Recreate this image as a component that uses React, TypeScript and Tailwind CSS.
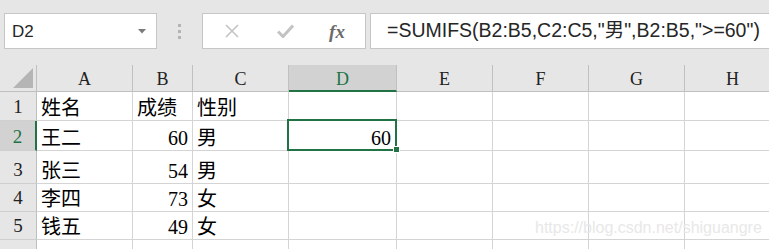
import React from "react";

const serif = { fontFamily: '"Liberation Serif", "Noto Sans CJK SC", serif' };
const sans = { fontFamily: '"Liberation Sans", "Noto Sans CJK SC", sans-serif' };

const cols = [
  { k: "A", w: "w-[96px]" },
  { k: "B", w: "w-[60px]" },
  { k: "C", w: "w-[96px]" },
  { k: "D", w: "w-[108px]" },
  { k: "E", w: "w-[96px]" },
  { k: "F", w: "w-[96px]" },
  { k: "G", w: "w-[96px]" },
  { k: "H", w: "w-[96px]" },
];

const rows: { h: string; cells: string[] }[] = [
  { h: "h-[29px]", cells: ["姓名", "成绩", "性别", "", "", "", "", ""] },
  { h: "h-[30px]", cells: ["王二", "60", "男", "60", "", "", "", ""] },
  { h: "h-[33px]", cells: ["张三", "54", "男", "", "", "", "", ""] },
  { h: "h-[28px]", cells: ["李四", "73", "女", "", "", "", "", ""] },
  { h: "h-[28px]", cells: ["钱五", "49", "女", "", "", "", "", ""] },
  { h: "h-[20px]", cells: ["", "", "", "", "", "", "", ""] },
];

const isNum = (s: string) => /^\d+$/.test(s);

export default function App() {
  return (
    <div className="relative w-[769px] h-[249px] overflow-hidden bg-white">
      {/* Formula bar area */}
      <div className="flex h-[65px] bg-[#e6e6e6] pt-[13px] pl-[4px] overflow-hidden">
        <div className="shrink-0 flex items-center justify-between w-[153px] h-[36px] bg-white border border-[#c6c6c6] pl-[7px] pr-[10px]">
          <span className="text-[17px] text-[#262626] leading-none" style={sans}>
            D2
          </span>
          <svg width="8" height="5" viewBox="0 0 8 5">
            <path d="M0 0 L8 0 L4 4.5 Z" fill="#7a7a7a" />
          </svg>
        </div>
        <div className="shrink-0 flex w-[45px] h-[36px] items-center justify-center">
          <div className="flex flex-col gap-[3px]">
            <div className="w-[3px] h-[3px] bg-[#b4b4b4]" />
            <div className="w-[3px] h-[3px] bg-[#b4b4b4]" />
            <div className="w-[3px] h-[3px] bg-[#b4b4b4]" />
          </div>
        </div>
        <div className="shrink-0 flex items-center w-[164px] h-[36px] bg-white border border-[#c6c6c6]">
          <div className="w-[56px] flex justify-center pl-[2px]">
            <svg width="16" height="16" viewBox="0 0 16 16">
              <path d="M2 2 L14 14 M14 2 L2 14" stroke="#c3c3c3" strokeWidth="1.6" fill="none" />
            </svg>
          </div>
          <div className="w-[52px] flex justify-center">
            <svg width="17" height="14" viewBox="0 0 17 14">
              <path d="M1 7.5 L6 12.5 L16 1.5" stroke="#c3c3c3" strokeWidth="3" fill="none" />
            </svg>
          </div>
          <div className="w-[52px] flex justify-center">
            <span
              className="italic font-bold text-[19px] text-[#6b6b6b] leading-none"
              style={{ fontFamily: '"Liberation Serif", serif' }}
            >
              fx
            </span>
          </div>
        </div>
        <div className="shrink-0 flex items-center w-[420px] h-[36px] bg-white border border-[#c6c6c6] ml-[4px] pl-[16px]">
          <span className="text-[19.5px] text-[#262626] leading-none whitespace-nowrap" style={sans}>
            =SUMIFS(B2:B5,C2:C5,"男",B2:B5,"&gt;=60")
          </span>
        </div>
      </div>

      {/* Column headers */}
      <div className="flex h-[27px]">
        <div className="relative w-[37px] shrink-0 bg-[#e6e6e6] border-r border-b border-[#c0c0c0]">
          <svg className="absolute left-[13px] top-[3px]" width="20" height="20" viewBox="0 0 20 20">
            <path d="M20 0 L20 20 L0 20 Z" fill="#b5b5b5" />
          </svg>
        </div>
        {cols.map((c) => {
          const sel = c.k === "D";
          return (
            <div
              key={c.k}
              className={`${c.w} shrink-0 flex items-center justify-center pt-[2px] text-[18px] leading-none border-r ${
                sel
                  ? "bg-[#d2d2d2] border-b-2 border-b-[#217346] border-r-[#c0c0c0] text-[#217346]"
                  : "bg-[#e6e6e6] border-b border-[#c0c0c0] text-[#222]"
              }`}
              style={serif}
            >
              {c.k}
            </div>
          );
        })}
      </div>

      {/* Rows */}
      {rows.map((r, ri) => {
        const rowSel = ri === 1;
        return (
          <div key={ri} className={`flex ${r.h}`}>
            <div
              className={`w-[37px] shrink-0 flex items-end justify-center pb-[3px] text-[19px] leading-[20px] border-b border-[#cfcfcf] ${
                rowSel
                  ? "bg-[#d2d2d2] border-r-2 border-r-[#217346] text-[#217346]"
                  : "bg-[#e6e6e6] border-r border-r-[#bfbfbf] text-[#222]"
              }`}
              style={serif}
            >
              {ri < 5 ? ri + 1 : ""}
            </div>
            {cols.map((c, ci) => {
              const v = r.cells[ci];
              const active = ri === 1 && c.k === "D";
              return (
                <div
                  key={c.k}
                  className={`${c.w} shrink-0 relative flex items-end pb-[2px] text-[20px] leading-[20px] text-black border-r border-b border-[#d4d4d4] ${
                    isNum(v) ? "justify-end pr-[4px]" : "justify-start pl-[4px]"
                  } ${active ? "z-10 pr-[5px]" : ""}`}
                  style={serif}
                >
                  {v}
                  {active && (
                    <>
                      <div className="absolute -left-[2px] -top-[2px] -right-[1px] -bottom-[1px] border-2 border-[#217346]" />
                      <div className="absolute -right-[4px] -bottom-[3px] w-[7px] h-[7px] bg-[#217346] border border-white" />
                    </>
                  )}
                </div>
              );
            })}
          </div>
        );
      })}

      {/* Watermark */}
      <div
        className="absolute left-[535px] top-[220px] text-[16px] leading-none text-[#e8e8e8] whitespace-nowrap"
        style={sans}
      >
        https://blog.csdn.net/shiguangre
      </div>
    </div>
  );
}
